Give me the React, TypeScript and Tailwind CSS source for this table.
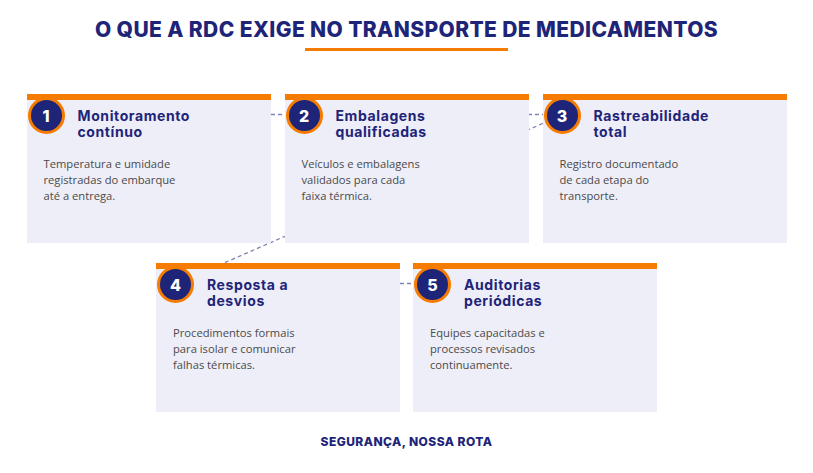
const steps = [
  {
    n: 1,
    title: ["Monitoramento", "contínuo"],
    body: ["Temperatura e umidade", "registradas do embarque", "até a entrega."],
  },
  {
    n: 2,
    title: ["Embalagens", "qualificadas"],
    body: ["Veículos e embalagens", "validados para cada", "faixa térmica."],
  },
  {
    n: 3,
    title: ["Rastreabilidade", "total"],
    body: ["Registro documentado", "de cada etapa do", "transporte."],
  },
  {
    n: 4,
    title: ["Resposta a", "desvios"],
    body: ["Procedimentos formais", "para isolar e comunicar", "falhas térmicas."],
  },
  {
    n: 5,
    title: ["Auditorias", "periódicas"],
    body: ["Equipes capacitadas e", "processos revisados", "continuamente."],
  },
];

type Step = (typeof steps)[number];

function StepCard({ step }: { step: Step }) {
  return (
    <div className="relative z-10 flex h-[149px] w-[244px] flex-col bg-[#eeeef8]">
      <div className="h-[6px] bg-[#f57c00]" />
      <div className="flex items-start">
        <div className="-mt-[3px] ml-[1px] flex h-[37px] w-[37px] shrink-0 items-center justify-center rounded-full border-[3px] border-[#f57c00] bg-[#1e2478] font-['Inter',sans-serif] text-[16px] font-extrabold text-white">
          {step.n}
        </div>
        <h3 className="ml-[13px] mt-[8px] flex flex-col font-['Inter',sans-serif] text-[14px] font-bold leading-[16px] tracking-[0.6px] text-[#1e2478]">
          <span>{step.title[0]}</span>
          <span>{step.title[1]}</span>
        </h3>
      </div>
      <p className="ml-[17px] mt-[16px] flex flex-col font-['Open_Sans',sans-serif] text-[11.2px] leading-[16px] text-[#4a4a4a]">
        {step.body.map((line, i) => (
          <span key={i}>{line}</span>
        ))}
      </p>
    </div>
  );
}

export default function App() {
  return (
    <div className="h-[473px] w-[813px] overflow-hidden bg-white">
      <h1 className="pt-[18px] text-center font-['Inter',sans-serif] text-[21px] font-extrabold leading-[24px] tracking-[0.4px] text-[#1e2478]">
        O QUE A RDC EXIGE NO TRANSPORTE DE MEDICAMENTOS
      </h1>
      <div className="mx-auto mt-[6px] h-[3px] w-[203px] bg-[#f57c00]" />

      <div className="relative mt-[43px]">
        {/* connectors run behind the cards, only the gaps show */}
        <svg
          className="absolute left-0 top-0 z-0"
          width="813"
          height="318"
          viewBox="0 0 813 318"
        >
          <g stroke="#7f82b6" strokeWidth="1.3" strokeDasharray="4 3" fill="none">
            <line x1="47" y1="20.5" x2="304" y2="20.5" />
            <line x1="304" y1="20.5" x2="562" y2="20.5" />
            <line x1="562" y1="21" x2="176" y2="190" />
            <line x1="176" y1="189.5" x2="433" y2="189.5" />
          </g>
        </svg>
        <div className="flex justify-center gap-[14px]">
          {steps.slice(0, 3).map((s) => (
            <StepCard key={s.n} step={s} />
          ))}
        </div>
        <div className="mt-[20px] flex justify-center gap-[13px]">
          {steps.slice(3).map((s) => (
            <StepCard key={s.n} step={s} />
          ))}
        </div>
      </div>

      <p className="mt-[22px] text-center font-['Inter',sans-serif] text-[12px] font-extrabold leading-[16px] tracking-[0.45px] text-[#1e2478]">
        SEGURANÇA, NOSSA ROTA
      </p>
    </div>
  );
}
